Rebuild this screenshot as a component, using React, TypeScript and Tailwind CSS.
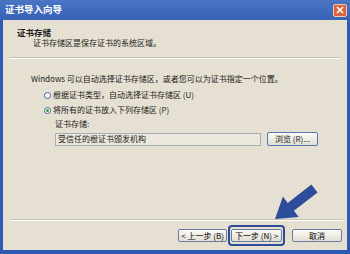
import React from "react";

const font = { fontFamily: '"Noto Sans CJK SC", "Liberation Sans", sans-serif' };

function Radio({ checked }: { checked?: boolean }) {
  return (
    <span className="flex h-[7px] w-[7px] items-center justify-center rounded-full border border-[#3a5f9c] bg-white">
      {checked && <span className="h-[3px] w-[3px] rounded-full bg-[#2f9a3a]" />}
    </span>
  );
}

function XpButton({ label, w }: { label: string; w: string }) {
  return (
    <button
      className={`flex h-[13px] ${w} items-center justify-center rounded-[2px] border border-[#6a7ca3] bg-gradient-to-b from-[#fbfbf8] to-[#e2ded2] text-[8px] leading-none text-black`}
    >
      {label}
    </button>
  );
}

export default function App() {
  return (
    <div
      style={font}
      className="relative flex h-[254px] w-[350px] flex-col overflow-hidden bg-[#2e5ab3]"
    >
      {/* title bar */}
      <div className="flex h-[20px] items-center justify-between bg-gradient-to-b from-[#4a74c4] to-[#3862b6] pl-[5px] pr-[3px]">
        <span className="text-[9.5px] font-bold leading-none text-white">证书导入向导</span>
        <span className="flex h-[13px] w-[14px] items-center justify-center rounded-[2px] border border-[#f0c8b8] bg-[#d8653f]">
          <svg width="8" height="8" viewBox="0 0 8 8">
            <path d="M1 1 L7 7 M7 1 L1 7" stroke="white" strokeWidth="1.6" />
          </svg>
        </span>
      </div>

      {/* body */}
      <div className="mx-[3px] mb-[4px] flex flex-1 flex-col bg-[#e6e0d2] text-[8px] leading-[10px] text-[#1a1a1a]">
        <div className="pl-[14px] pt-[7px] text-[8.5px] font-bold">证书存储</div>
        <div className="pl-[30px] pt-[1px]">证书存储区是保存证书的系统区域。</div>

        <div className="ml-[7px] mr-[6px] mt-[9px] border-b border-t border-b-white border-t-[#c4bfb2]" />

        <div className="pl-[28px] pt-[15px]">Windows 可以自动选择证书存储区，或者您可以为证书指定一个位置。</div>

        <div className="flex items-center gap-[2px] pl-[41px] pt-[6px]">
          <Radio />
          <span>根据证书类型，自动选择证书存储区 (U)</span>
        </div>
        <div className="flex items-center gap-[2px] pl-[41px] pt-[5px]">
          <Radio checked />
          <span>将所有的证书放入下列存储区 (P)</span>
        </div>

        <div className="pl-[52px] pt-[4px]">证书存储:</div>
        <div className="flex items-center gap-[6px] pl-[52px] pt-[3px]">
          <div className="flex h-[13px] w-[206px] items-center border border-[#a5acb5] bg-[#ebe7dc] pl-[2px]">
            受信任的根证书颁发机构
          </div>
          <button className="flex h-[14px] w-[51px] items-center justify-center rounded-[2px] border border-[#5577b8] bg-gradient-to-b from-[#fbfbf8] to-[#e2ded2] text-[8px] leading-none">
            浏览 (R)...
          </button>
        </div>

        <div className="flex-1" />

        <div className="ml-[7px] mr-[4px] border-b border-t border-b-white border-t-[#c4bfb2]" />

        <div className="flex items-center pb-[4px] pl-[175px] pt-[4px]">
          <XpButton label="< 上一步 (B)" w="w-[49px]" />
          <div className="ml-[1px] rounded-[4px] border-2 border-[#2d4c9c] px-[1px] py-[2px]">
            <XpButton label="下一步 (N) >" w="w-[51px]" />
          </div>
          <div className="ml-[7px]">
            <XpButton label="取消" w="w-[50px]" />
          </div>
        </div>
      </div>

      {/* annotation arrow */}
      <svg className="pointer-events-none absolute left-0 top-0" width="350" height="254" viewBox="0 0 350 254">
        <polygon
          points="275,219 298.7,217.1 293.9,210.8 317.6,192.5 311.4,184.6 287.7,202.9 282.9,196.5"
          fill="#2d4c9c"
        />
      </svg>
    </div>
  );
}
